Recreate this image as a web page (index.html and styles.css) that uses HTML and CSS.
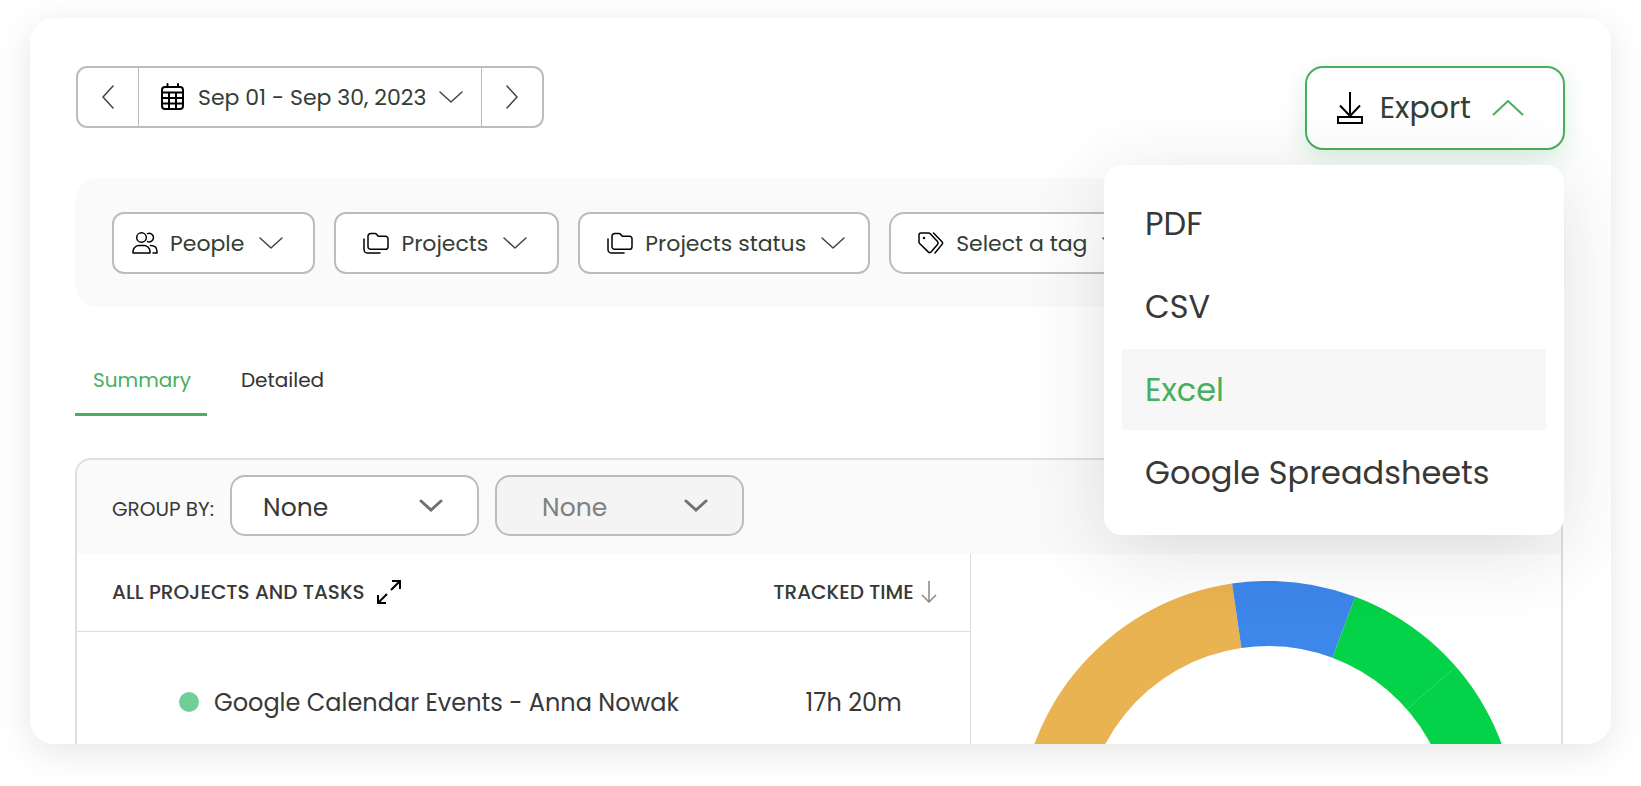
FILE: index.html
```html
<!DOCTYPE html>
<html lang="en">
<head>
  <meta charset="UTF-8">
  <meta name="viewport" content="width=device-width, initial-scale=1.0">
  <title>Time report</title>
  <link rel="stylesheet" href="styles.css">
</head>
<body>

  <!-- shared icons -->
  <svg class="sprite" aria-hidden="true">
    <symbol id="chevron-down" viewBox="0 0 24 12"><path d="M1 1l11 10L23 1"/></symbol>
    <symbol id="folders" viewBox="0 0 26 22">
      <path d="M5 4.200a2.600 2.600 0 0 1 2.600-2.600H12c.8 0 1.300 .3 1.800 .9l1.400 1.700h7.200A2.600 2.600 0 0 1 25 6.800v7.900a2.600 2.600 0 0 1-2.600 2.600H7.600A2.600 2.600 0 0 1 5 14.700z"/>
      <path d="M1 7v10.400A3.600 3.600 0 0 0 4.600 21H17"/>
    </symbol>
  </svg>

  <main class="card">
    <header class="toolbar">
      <div class="date-nav">
        <button class="date-step" aria-label="Previous period">
          <svg class="icon" width="12" height="24" viewBox="0 0 12 24"><path d="M11 1L1 12l10 11"/></svg>
        </button>
        <button class="date-range">
          <svg class="icon icon-calendar" width="24" height="28" viewBox="0 0 24 28">
            <rect x="1" y="4" width="21" height="22" rx="3"/>
            <path d="M6.500 1v3M17 1v3M1 9.500h21M1 15h21M1 20.500h21M8 9.500V26M15 9.500V26"/>
          </svg>
          <span>Sep 01 - Sep 30, 2023</span>
          <svg class="icon" width="24" height="12"><use href="#chevron-down"/></svg>
        </button>
        <button class="date-step" aria-label="Next period">
          <svg class="icon" width="12" height="24" viewBox="0 0 12 24"><path d="M1 1l10 11L1 23"/></svg>
        </button>
      </div>

      <div class="export">
        <button class="export-btn" aria-expanded="true">
          <svg class="icon-export" width="26" height="32" viewBox="0 0 26 32">
            <path d="M13 0v24M3 13.500l10 10.500 10-10.500"/>
            <rect x="1" y="25" width="24" height="6"/>
          </svg>
          <span>Export</span>
          <svg class="icon-up" width="32" height="16" viewBox="0 0 32 16"><path d="M1 15L16 1l15 14"/></svg>
        </button>
        <div class="export-menu">
          <button>PDF</button>
          <button>CSV</button>
          <button class="active">Excel</button>
          <button>Google Spreadsheets</button>
        </div>
      </div>
    </header>

    <section class="filters">
      <button class="filter">
        <svg class="icon icon-dark" width="26" height="22" viewBox="0 0 26 22">
          <ellipse cx="9.500" cy="5.500" rx="4.800" ry="4.700"/>
          <path d="M1 21v-1.500C1 16 4 13.600 7 13.600h5c3 0 6 2.400 6 5.900V21z"/>
          <path d="M15.500 1.600c3-1 6 1 6 4s-3 5-6 4M18.500 13.600c4 0 6.500 2.400 6.500 5.900V21h-4"/>
        </svg>
        <span>People</span>
        <svg class="icon chevron" width="24" height="12"><use href="#chevron-down"/></svg>
      </button>
      <button class="filter filter-wide">
        <svg class="icon icon-dark" width="26" height="22"><use href="#folders"/></svg>
        <span>Projects</span>
        <svg class="icon chevron" width="24" height="12"><use href="#chevron-down"/></svg>
      </button>
      <button class="filter filter-wide filter-status">
        <svg class="icon icon-dark" width="26" height="22"><use href="#folders"/></svg>
        <span>Projects status</span>
        <svg class="icon chevron" width="24" height="12"><use href="#chevron-down"/></svg>
      </button>
      <button class="filter filter-wide filter-tag">
        <svg class="icon icon-dark" width="26" height="22" viewBox="0 0 26 22">
          <path d="M1 3a2 2 0 0 1 2-2h7.500c.6 0 1.100 .2 1.500 .6l7.500 8c.8 .9 .8 2 0 2.800l-6.500 7.500c-.8 .9-2 .9-2.800 0L1.600 11.500C1.200 11.100 1 10.600 1 10z"/>
          <path d="M15.500 1l8.500 8.700c.8 .9 .8 1.800 0 2.700L17 21"/>
          <circle cx="6" cy="6" r="0.500"/>
        </svg>
        <span>Select a tag</span>
        <svg class="icon chevron" width="24" height="12"><use href="#chevron-down"/></svg>
      </button>
    </section>

    <nav class="tabs">
      <a href="#summary" class="tab active">Summary</a>
      <a href="#detailed" class="tab">Detailed</a>
    </nav>

    <section class="report">
      <div class="group-by">
        <label for="group1">GROUP BY:</label>
        <div class="select">
          <select id="group1"><option>None</option></select>
          <svg width="24" height="14" viewBox="0 0 24 14"><path d="M2 2l10 9 10-9"/></svg>
        </div>
        <div class="select">
          <select id="group2" aria-label="Then group by" disabled><option>None</option></select>
          <svg width="24" height="14" viewBox="0 0 24 14"><path d="M2 2l10 9 10-9"/></svg>
        </div>
      </div>

      <div class="report-body">
        <table class="tasks">
          <thead>
            <tr>
              <th>
                <div class="cell">
                  ALL PROJECTS AND TASKS
                  <svg class="icon-expand" width="24" height="24" viewBox="0 0 24 24">
                    <path d="M14 10L23 1M15 1h8v8M10 14L1 23M1 15v8h8"/>
                  </svg>
                </div>
              </th>
              <th>
                <div class="cell cell-end">
                  TRACKED TIME
                  <svg class="icon-sort" width="16" height="22" viewBox="0 0 16 22"><path d="M8 0v21M1 14l7 7 7-7"/></svg>
                </div>
              </th>
            </tr>
          </thead>
          <tbody>
            <tr>
              <td>
                <div class="cell task"><span class="dot"></span>Google Calendar Events - Anna Nowak</div>
              </td>
              <td class="time">17h 20m</td>
            </tr>
          </tbody>
        </table>

        <div class="chart">
          <!-- ring: centre 249,249, outer radius 249, inner radius 184 -->
          <svg width="498" height="498" viewBox="0 0 498 498" role="img" aria-label="Tracked time by project">
            <path fill="#eab351" d="M249 498A249 249 0 0 1 213.060 2.610L222.440 66.930A184 184 0 0 0 249 433z"/>
            <path fill="#3d86ea" d="M213.060 2.610A249 249 0 0 1 336.200 15.770L313.440 76.650A184 184 0 0 0 222.440 66.930z"/>
            <path fill="#04d248" d="M336.200 15.770A249 249 0 0 1 249 498V433A184 184 0 0 0 313.440 76.650z"/>
            <path class="split" d="M387.870 128.280L436.920 85.640"/>
          </svg>
        </div>
      </div>
    </section>
  </main>

</body>
</html>
```
FILE: styles.css
```css
* {
  box-sizing: border-box;
}

body {
  margin: 0;
  height: 100vh;
  padding: 18px 30px 42px;
  background: #fff;
  color: #383838;
  font-family: "Poppins", "Inter", sans-serif;
  font-size: 22px;
  overflow: hidden;
}

button,
select {
  font: inherit;
  color: inherit;
  cursor: pointer;
}

.sprite {
  display: none;
}

.card {
  height: 100%;
  padding: 48px 46px 0 45px;
  border-radius: 24px;
  background: #fff;
  box-shadow: 0 8px 36px rgba(0, 0, 0, 0.1);
  overflow: hidden;
}

.icon {
  flex: none;
  fill: none;
  stroke: #444;
  stroke-width: 1.5;
  stroke-linecap: round;
  stroke-linejoin: round;
}

.icon-dark {
  stroke: #000;
}

.icon-calendar {
  stroke: #000;
  stroke-width: 2;
}

/* toolbar */
.toolbar {
  display: flex;
  justify-content: space-between;
  align-items: flex-start;
  padding-left: 1px;
}

.date-nav {
  display: flex;
  height: 62px;
  border: 2px solid #bcbcbc;
  border-radius: 11px;
  color: #353e35;
}

.date-nav button {
  display: flex;
  align-items: center;
  justify-content: center;
  border: 0;
  background: none;
}

.date-step {
  width: 60px;
  padding: 0;
}

.date-nav .date-range {
  gap: 13px;
  padding: 0 18px 0 22px;
  border: solid #bcbcbc;
  border-width: 0 1px;
}

.export {
  position: relative;
}

.export-btn {
  display: flex;
  align-items: center;
  gap: 17px;
  height: 84px;
  padding: 0 39px 0 30px;
  border: 2px solid #48ae60;
  border-radius: 18px;
  background: #fff;
  color: #353e35;
  font-size: 30px;
  box-shadow: 0 8px 24px rgba(72, 174, 96, 0.2);
}

.icon-export {
  fill: none;
  stroke: #000;
  stroke-width: 2;
}

.icon-up {
  margin-left: 4px;
  fill: none;
  stroke: #48ae60;
  stroke-width: 2;
}

.export-menu {
  position: absolute;
  top: 99px;
  right: 1px;
  display: flex;
  flex-direction: column;
  gap: 2px;
  width: 460px;
  padding: 18px 18px 22px;
  border-radius: 18px;
  background: #fff;
  box-shadow: 0 16px 80px rgba(20, 40, 30, 0.14);
}

.export-menu button {
  height: 81px;
  padding: 0 23px;
  border: 0;
  background: none;
  font-size: 32px;
  text-align: left;
}

.export-menu .active {
  background: #f7f7f7;
  color: #48ae60;
}

/* filters */
.filters {
  display: flex;
  gap: 19px;
  margin-top: 28px;
  padding: 34px 37px 33px;
  border-radius: 24px;
  background: #fafafa;
}

.filter {
  display: flex;
  align-items: center;
  gap: 12px;
  height: 62px;
  padding: 0 30px 0 18px;
  border: 2px solid #bcbcbc;
  border-radius: 12px;
  background: #fff;
  color: #353e35;
  white-space: nowrap;
}

.filter .chevron {
  margin-left: 3px;
}

.filter-wide {
  padding-left: 27px;
}

.filter-status {
  padding-right: 23px;
}

.filter-tag {
  border-radius: 15px;
}

/* tabs */
.tabs {
  display: flex;
  margin: 50px 0 42px;
  font-size: 20px;
}

.tab {
  height: 59px;
  padding: 11px 16px 0 18px;
  border-bottom: 3px solid transparent;
  color: #333;
  line-height: 24px;
  text-decoration: none;
}

.tab + .tab {
  margin-left: 16px;
}

.tab.active {
  border-color: #48ae60;
  color: #48ae60;
}

/* report */
.report {
  margin-right: 2px;
  border: 2px solid #dedede;
  border-radius: 16px 16px 0 0;
  background: #fff;
}

.group-by {
  display: flex;
  align-items: center;
  gap: 16px;
  padding: 15px 35px 18px;
  border-radius: 14px 14px 0 0;
  background: #fafafa;
}

.group-by label {
  padding-top: 6px;
  font-size: 20px;
}

.select {
  position: relative;
}

.select select {
  width: 249px;
  height: 61px;
  padding: 4px 31px 0;
  border: 2px solid #bcbcbc;
  border-radius: 15px;
  background: #fff;
  appearance: none;
  font-size: 25px;
}

.select select:disabled {
  padding-left: 45px;
  background: #f4f4f4;
  color: #808080;
  opacity: 1;
}

.select svg {
  position: absolute;
  top: 24px;
  right: 36px;
  fill: none;
  stroke: #707070;
  stroke-width: 3;
  stroke-linecap: round;
  pointer-events: none;
}

.report-body {
  display: grid;
  grid-template-columns: 1.51fr 1fr;
}

.tasks {
  width: 100%;
  border-collapse: collapse;
  align-self: start;
}

.tasks th {
  height: 77px;
  padding: 0 33px 0 35px;
  border-bottom: 1px solid #dedede;
  font-size: 20px;
  font-weight: 500;
  text-align: left;
  white-space: nowrap;
}

.tasks td {
  height: 142px;
  padding: 0;
  font-size: 24px;
}

.cell {
  display: flex;
  align-items: center;
  gap: 12px;
}

.cell-end {
  justify-content: flex-end;
  gap: 7px;
}

.task {
  gap: 15px;
  padding-left: 102px;
}

.dot {
  width: 20px;
  height: 20px;
  border-radius: 50%;
  background: #70ce97;
}

.tasks .time {
  padding-right: 68px;
  text-align: right;
}

.icon-expand {
  fill: none;
  stroke: #000;
  stroke-width: 2;
}

.icon-sort {
  fill: none;
  stroke: #888;
  stroke-width: 1.5;
}

.chart {
  display: flex;
  justify-content: center;
  padding: 27px 0 27px 4px;
  border-left: 1px solid #dedede;
}

.split {
  fill: none;
  stroke: #35da6c;
  stroke-width: 1;
}
```
